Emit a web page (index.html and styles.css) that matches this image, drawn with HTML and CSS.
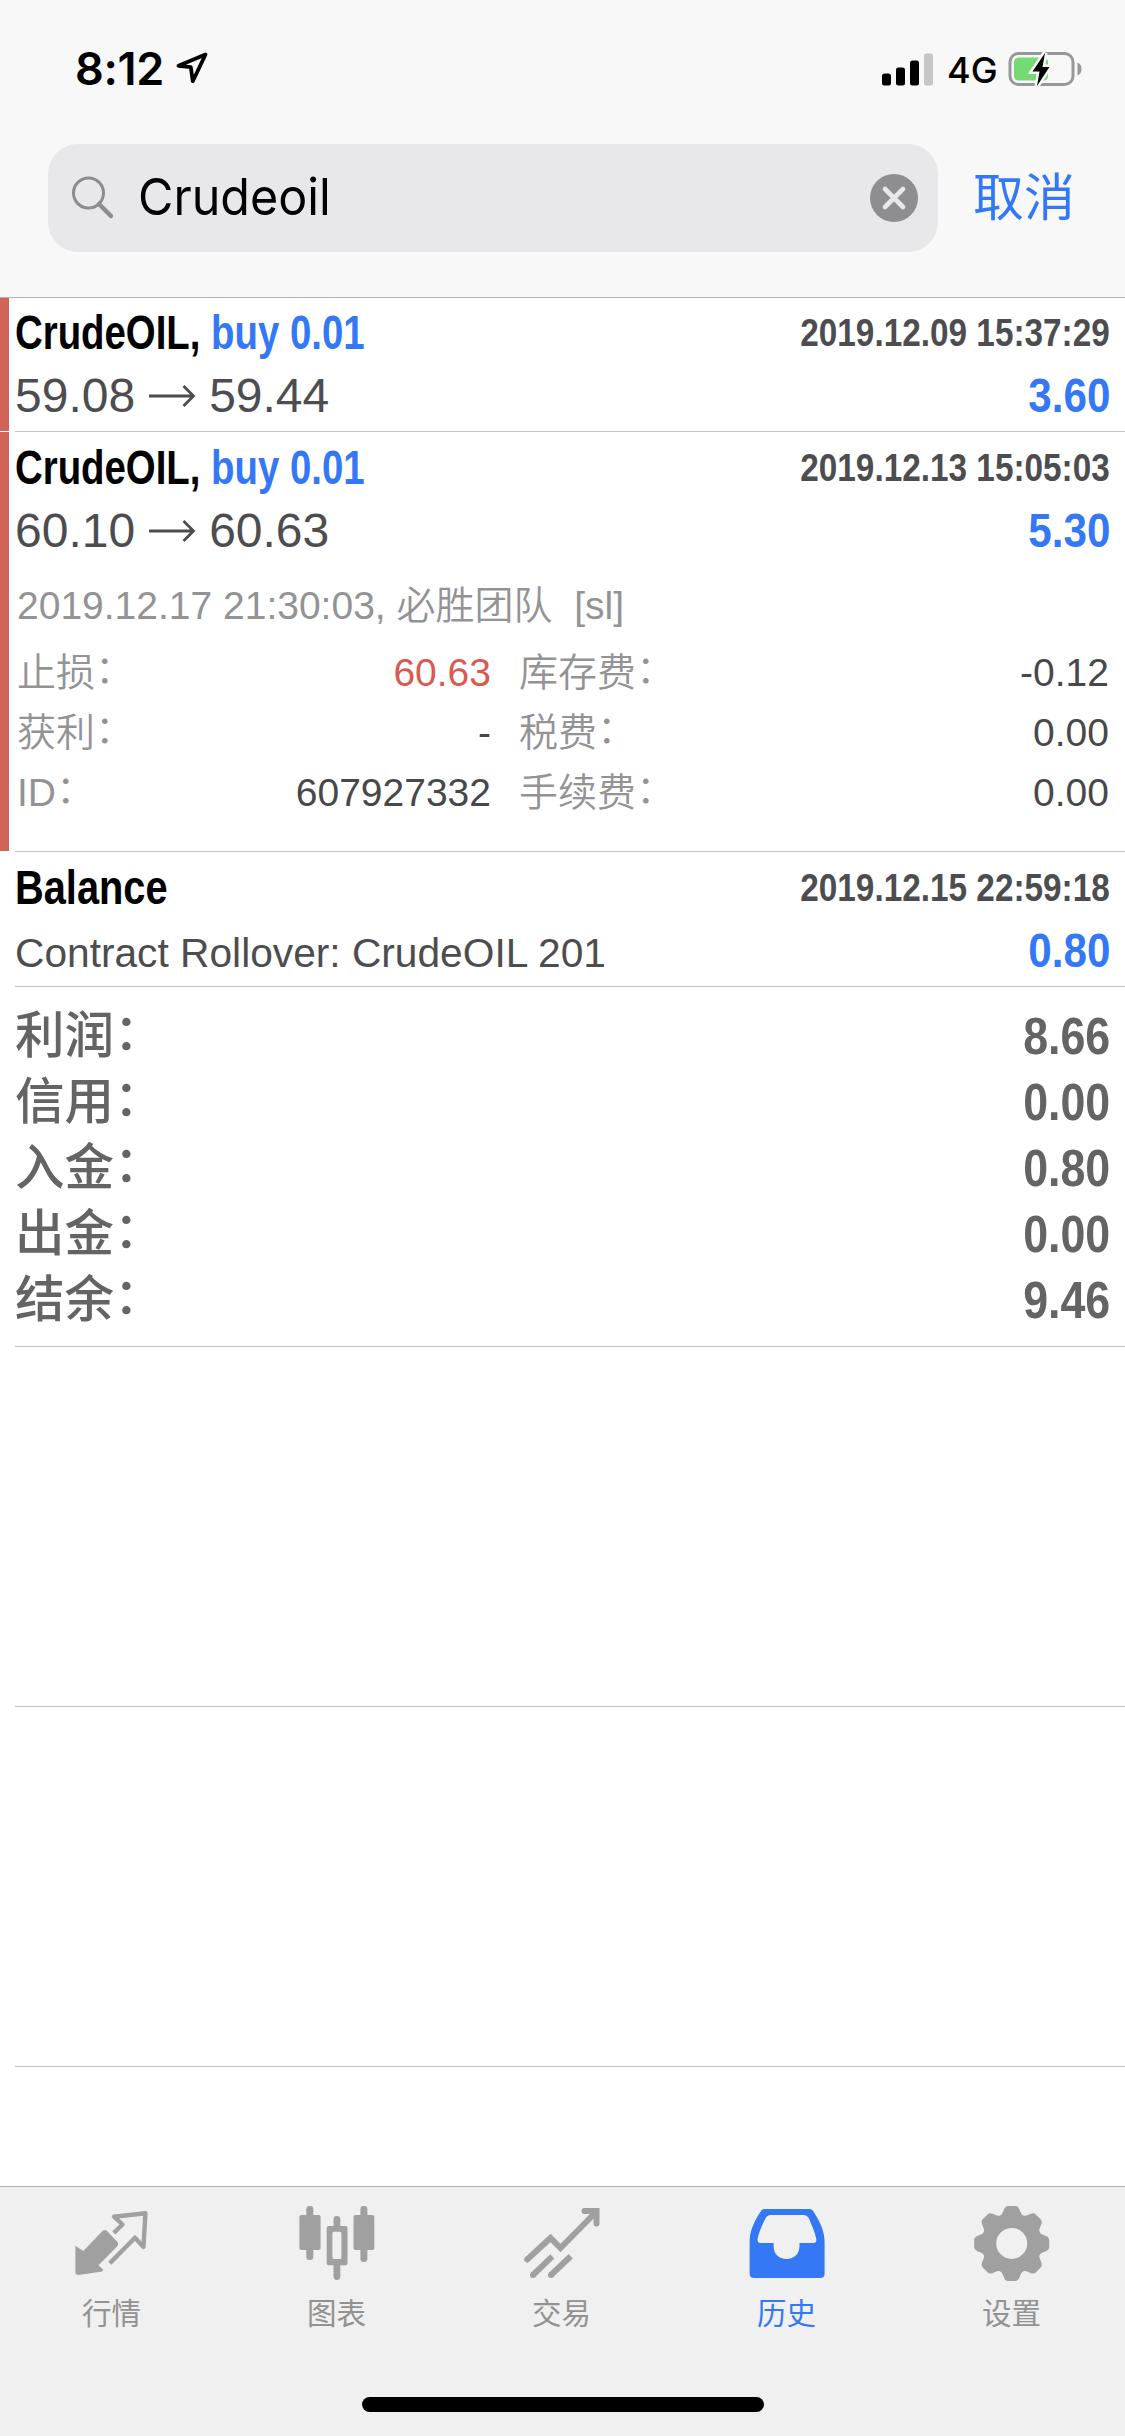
FILE: index.html
```html
<!DOCTYPE html>
<html lang="zh-CN">
<head>
<meta charset="utf-8">
<title>历史</title>
<link rel="stylesheet" href="styles.css">
</head>
<body>
<div class="screen">
  <header class="header">
    <div class="status">
      <span class="clock">8:12</span>
      <svg class="locator" width="34" height="34" viewBox="0 0 34 34"><path d="M29.500 3.500 2.500 14.800 14.800 16.200 16.800 30.200Z" fill="none" stroke="#000" stroke-width="3.800" stroke-linejoin="round"/></svg>
      <svg class="signal" width="52" height="34" viewBox="0 0 52 34"><rect x="0" y="21.500" width="9" height="12" rx="2.500"/><rect x="14" y="15.500" width="9" height="18" rx="2.500"/><rect x="28" y="8.500" width="9" height="25" rx="2.500"/><rect x="42" y="1.500" width="9" height="32" rx="2.500" fill="#c6c6c6"/></svg>
      <span class="network">4G</span>
      <svg class="battery" width="76" height="38" viewBox="0 0 76 38"><rect x="2" y="3.500" width="63" height="31" rx="8.500" fill="none" stroke="#98989b" stroke-width="3"/><path d="M69.500 12.500q4 1.500 4 6.500t-4 6.500z" fill="#98989b"/><rect x="6" y="7.500" width="34" height="23" rx="4.500" fill="#74db74"/><path d="M37 3 24.500 21.500h7L29 36 41.500 17h-7z" fill="#000" stroke="#f8f8f8" stroke-width="5" paint-order="stroke"/></svg>
    </div>
    <div class="searchbar">
      <div class="field">
        <svg width="44" height="46" viewBox="0 0 44 46"><circle cx="17.500" cy="18" r="15" fill="none" stroke="#8c8c8e" stroke-width="3"/><path d="M28 29 40 41" stroke="#8c8c8e" stroke-width="4.500" stroke-linecap="round"/></svg>
        <span class="query">Crudeoil</span>
        <svg class="clear" width="48" height="48" viewBox="0 0 48 48"><circle cx="24" cy="24" r="24" fill="#8e8e90"/><path d="M15 15 33 33M33 15 15 33" stroke="#e8e8ea" stroke-width="4.600" stroke-linecap="round"/></svg>
      </div>
      <span class="cancel">取消</span>
    </div>
  </header>

  <main class="list">
    <section class="deal marked first">
      <div class="line head"><span class="title">CrudeOIL, <span class="buy">buy 0.01</span></span><span class="date">2019.12.09 15:37:29</span></div>
      <div class="line"><span class="price">59.08<svg class="arrow" width="74" height="24" viewBox="0 0 74 24"><path d="M14 12H58M48.500 2 58.500 12 48.500 22" fill="none" stroke="#4d4d50" stroke-width="2.800"/></svg>59.44</span><span class="profit">3.60</span></div>
    </section>
    <section class="deal marked open">
      <div class="line head"><span class="title">CrudeOIL, <span class="buy">buy 0.01</span></span><span class="date">2019.12.13 15:05:03</span></div>
      <div class="line"><span class="price">60.10<svg class="arrow" width="74" height="24" viewBox="0 0 74 24"><path d="M14 12H58M48.500 2 58.500 12 48.500 22" fill="none" stroke="#4d4d50" stroke-width="2.800"/></svg>60.63</span><span class="profit">5.30</span></div>
      <div class="comment">2019.12.17 21:30:03, 必胜团队&nbsp; [sl]</div>
      <div class="details">
        <div class="pair"><span class="label">止损<span class="colon">：</span></span><span class="red">60.63</span></div>
        <div class="pair"><span class="label">库存费<span class="colon">：</span></span><span>-0.12</span></div>
        <div class="pair"><span class="label">获利<span class="colon">：</span></span><span>-</span></div>
        <div class="pair"><span class="label">税费<span class="colon">：</span></span><span>0.00</span></div>
        <div class="pair"><span class="label">ID<span class="colon">：</span></span><span>607927332</span></div>
        <div class="pair"><span class="label">手续费<span class="colon">：</span></span><span>0.00</span></div>
      </div>
    </section>
    <section class="deal">
      <div class="line head"><span class="title balance">Balance</span><span class="date">2019.12.15 22:59:18</span></div>
      <div class="line"><span class="note">Contract Rollover: CrudeOIL 201</span><span class="profit">0.80</span></div>
    </section>
    <section class="totals">
      <div class="total"><span class="name">利润<span class="colon">：</span></span><span class="sum">8.66</span></div>
      <div class="total"><span class="name">信用<span class="colon">：</span></span><span class="sum">0.00</span></div>
      <div class="total"><span class="name">入金<span class="colon">：</span></span><span class="sum">0.80</span></div>
      <div class="total"><span class="name">出金<span class="colon">：</span></span><span class="sum">0.00</span></div>
      <div class="total"><span class="name">结余<span class="colon">：</span></span><span class="sum">9.46</span></div>
    </section>
    <div class="blank"></div>
    <div class="blank"></div>
  </main>

  <footer class="footer">
    <nav class="tabs">
      <div class="tab">
        <svg width="80" height="80" viewBox="0 0 80 80"><path d="M3.400 41.700V68.500Q3.600 71 6.600 71L30 67.500Q32 66 30.500 65L26.500 61.300 45 42.500Q47 40 45.500 38L35 27Q32.800 25 30.500 27L11.300 47Z" fill="currentColor"/><path d="M41.800 29 50.500 20.500 42 12.700 73.400 9.300 71.500 43 63 33.700 37.800 59.300" fill="none" stroke="currentColor" stroke-width="4.400" stroke-linejoin="round"/></svg>
        <span>行情</span>
      </div>
      <div class="tab">
        <svg width="80" height="80" viewBox="0 0 80 80" fill="currentColor"><rect x="2.400" y="11" width="21.200" height="35" rx="2"/><rect x="9.300" y="2" width="7" height="54" rx="3.300"/><rect x="56.500" y="11" width="20.800" height="35" rx="2"/><rect x="63.400" y="2" width="7" height="56" rx="3.300"/><path fill-rule="evenodd" d="M31.700 22H48.500Q50.500 22 50.500 24V59.300Q50.500 61.300 48.500 61.300H31.700Q29.700 61.300 29.700 59.300V24Q29.700 22 31.700 22ZM36.900 27.700Q35.400 27.700 35.400 29.200V53.500Q35.400 55 36.900 55H42.900Q44.400 55 44.400 53.500V29.200Q44.400 27.700 42.900 27.700Z"/><path d="M36.500 23V15.300a3.400 3.400 0 0 1 6.800 0V23ZM36.500 60V72.500a3.400 3.400 0 0 0 6.800 0V60Z"/></svg>
        <span>图表</span>
      </div>
      <div class="tab">
        <svg width="80" height="80" viewBox="0 0 80 80" fill="none" stroke="currentColor" stroke-width="6"><path d="M5.200 55.500 28.500 34 38.500 44 74 8" stroke-linecap="round"/><path d="M62.500 7H74.500V19.500" stroke-linecap="round"/><path d="M11 71 30.300 52.300M29 71 48.700 52.300"/><g fill="currentColor" stroke="none"><circle cx="11" cy="71" r="3"/><circle cx="29" cy="71" r="3"/></g></svg>
        <span>交易</span>
      </div>
      <div class="tab active">
        <svg width="80" height="80" viewBox="0 0 80 80"><path fill="currentColor" fill-rule="evenodd" d="M17.500 5H62.500Q65.500 5 67 8.500C73 18 77.600 27 77.600 38V69.500Q77.600 74 73 74H7.200Q2.600 74 2.600 69.500V38C2.600 27 7 18 13 8.500Q14.700 5 17.500 5ZM24 11Q20 11 18.500 14.500C15 21 12 28 10.500 35Q10.300 39 13.500 39H26.600V42C26.600 50 32 55 39.500 55S52.500 50 52.500 42V39H66.500Q69.800 39 69.300 35C68 28 64.500 21 62 14.500Q60 11 56.500 11Z"/></svg>
        <span>历史</span>
      </div>
      <div class="tab">
        <svg width="80" height="80" viewBox="0 0 80 80"><g transform="translate(39.700 39.400)"><circle r="22.500" fill="none" stroke="currentColor" stroke-width="14"/><g fill="currentColor"><path id="tooth" d="M-12-27.500Q-9.500-28.500-8.500-32-7-37.500-3.500-37.500H3.500Q7-37.500 8.500-32 9.500-28.500 12-27.500L8-20H-8Z"/><use href="#tooth" transform="rotate(45)"/><use href="#tooth" transform="rotate(90)"/><use href="#tooth" transform="rotate(135)"/><use href="#tooth" transform="rotate(180)"/><use href="#tooth" transform="rotate(225)"/><use href="#tooth" transform="rotate(270)"/><use href="#tooth" transform="rotate(315)"/></g></g></svg>
        <span>设置</span>
      </div>
    </nav>
    <div class="home-indicator"></div>
  </footer>
</div>
</body>
</html>
```
FILE: styles.css
```css
* { box-sizing: border-box; }
body {
  margin: 0;
  background: #fff;
  font-family: "Liberation Sans", "Noto Sans CJK SC", sans-serif;
}
svg { display: block; flex: none; }
.screen {
  width: 1125px;
  height: 2436px;
  display: flex;
  flex-direction: column;
  overflow: hidden;
}

/* header */
.header {
  height: 298px;
  flex: none;
  background: #f8f8f8;
  border-bottom: 1px solid #b2b2b2;
}
.status {
  height: 144px;
  padding: 42px 41px 0 75px;
  display: flex;
  align-items: flex-start;
  font-family: Inter, sans-serif;
}
.clock {
  font-size: 45px;
  line-height: 54px;
  font-weight: 600;
  letter-spacing: -.3px;
  width: 101px;
  white-space: nowrap;
}
.locator { margin-top: 9px; }
.signal { margin: 10px 0 0 auto; }
.network {
  font-size: 36px;
  line-height: 56px;
  font-weight: 450;
  width: 61px;
  margin-left: 13px;
}
.battery { margin-top: 8px; }
.searchbar {
  display: flex;
  align-items: center;
  padding: 0 50px 0 48px;
  justify-content: space-between;
}
.field {
  width: 890px;
  height: 108px;
  border-radius: 30px;
  background: #e8e8ea;
  display: flex;
  align-items: center;
  padding: 0 20px 0 23px;
}
.query {
  font: 400 51px/60px Inter, sans-serif;
  margin: 0 0 3px 23px;
  transform: scaleX(.95);
  transform-origin: left;
}
.clear { margin-left: auto; }
.cancel {
  font: 400 51px/72px "Noto Sans CJK SC", sans-serif;
  margin-bottom: 8px;
  color: #3478f6;
}

/* deals */
.list { flex: 1; overflow: hidden; }
.deal {
  position: relative;
  height: 135px;
  padding: 4px 15px 0 15px;
}
.deal::after, .totals::after, .blank::after {
  content: "";
  position: absolute;
  left: 15px;
  right: 0;
  bottom: 0;
  height: 1px;
  background: #c4c4c6;
}
.marked::before {
  content: "";
  position: absolute;
  left: 0;
  top: 0;
  bottom: 1px;
  width: 9px;
  background: #d16455;
}
.deal.first { height: 134px; padding-top: 3px; }
.deal.open { height: 420px; }
.line {
  display: flex;
  justify-content: space-between;
  align-items: baseline;
  height: 64px;
  line-height: 64px;
  white-space: nowrap;
  color: #4d4d50;
}
.line.head { height: 62px; line-height: 62px; align-items: center; }
.title {
  font-size: 49px;
  font-weight: 700;
  color: #000;
  transform: scaleX(.783);
  transform-origin: left;
}
.title.balance { transform: scaleX(.812); }
.buy, .profit { color: #3478f6; }
.date {
  font-size: 39.5px;
  font-weight: 700;
  transform: scaleX(.844);
  transform-origin: right;
}
.price { font-size: 48px; display: flex; align-items: center; }
.profit {
  font-size: 49px;
  font-weight: 700;
  transform: scaleX(.86);
  transform-origin: right;
}
.note { font-size: 40.7px; }
.comment {
  padding: 6px 2px 0;
  font-size: 39px;
  font-weight: 350;
  line-height: 76px;
  height: 81px;
  color: #939395;
  white-space: pre;
}
.details {
  display: grid;
  grid-template-columns: 474px 590px;
  column-gap: 28px;
  padding-left: 2px;
  font-size: 39px;
  line-height: 60px;
  color: #48484a;
}
.pair { display: flex; justify-content: space-between; height: 60px; }
.label { color: #939395; font-weight: 350; }
.colon { display: inline-block; line-height: 1; transform: translateY(-3px); }
.red { color: #d95a50; }

/* totals */
.totals {
  position: relative;
  height: 360px;
  padding: 16px 15px 0;
  color: #646464;
}
.total {
  display: flex;
  justify-content: space-between;
  height: 66px;
  line-height: 66px;
}
.name { font-size: 49.5px; font-weight: 500; }
.sum {
  font-size: 52px;
  font-weight: 700;
  transform: scaleX(.86);
  transform-origin: right;
}
.blank { position: relative; height: 360px; }

/* tab bar */
.footer {
  height: 250px;
  flex: none;
  background: #f0f0f0;
  border-top: 1px solid #b2b2b2;
  display: flex;
  flex-direction: column;
  align-items: center;
  justify-content: space-between;
  padding: 17px 0 24px;
}
.tabs { display: flex; margin-left: -2px; }
.tab {
  width: 225px;
  display: flex;
  flex-direction: column;
  align-items: center;
  color: #a0a0a0;
  font: 400 29.5px/44px "Noto Sans CJK SC", sans-serif;
}
.tab span { margin-top: 5px; color: #929292; }
.tab.active, .tab.active span { color: #3478f6; }
.home-indicator { width: 402px; height: 15px; border-radius: 8px; background: #000; }
```
